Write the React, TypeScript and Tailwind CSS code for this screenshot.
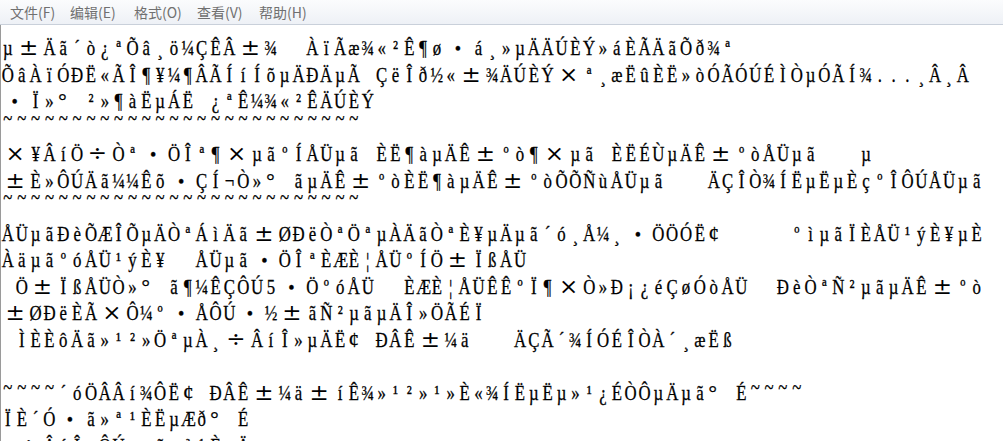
import React from "react";

const FULL_MATH = new Set(["±", "×", "÷"]);
const FULL_LEFT = new Set(["°", "¢", "¨", "§", "¤"]);

const T26 = "~".repeat(26);

const LINES: string[] = [
  "µ±Äã´ò¿ªÕâ¸ö¼ÇÊÂ±¾  ÀïÃæ¾«²Ê¶ø·á¸»µÄÄÚÈÝ»áÈÃÄãÕð¾ª",
  "ÕâÀïÓÐË«ÃÎ¶¥¼¶ÂÃÍíÍõµÄÐÄµÃ ÇëÎð½«±¾ÄÚÈÝ×ª¸æËûÈË»òÓÃÓÚÉÌÒµÓÃÍ¾...¸Â¸Â",
  "·Ï»°²»¶àËµÁË ¿ªÊ¼¾«²ÊÄÚÈÝ",
  T26,
  "×¥ÂíÖ÷Òª·ÖÎª¶×µãºÍÅÜµã ÈË¶àµÄÊ±ºò¶×µã ÈËÉÙµÄÊ±ºòÅÜµã   µ",
  "±È»ÔÚÄã¼¼Êõ·ÇÍ¬Ò»°ãµÄÊ±ºòÈË¶àµÄÊ±ºòÕÕÑùÅÜµã   ÄÇÎÒ¾ÍËµËµÈçºÎÔÚÅÜµã",
  T26,
  "ÅÜµãÐèÕÆÎÕµÄÒªÁìÄã±ØÐëÒªÖªµÀÄãÒªÈ¥µÄµã´ó¸Å¼¸·ÖÖÓË¢    ºìµãÏÈÅÜ¹ýÈ¥µÈ",
  "ÀäµãºóÅÜ¹ýÈ¥  ÅÜµã·ÖÎªÈÆÈ¦ÅÜºÍÖ±ÏßÅÜ",
  " Ö±ÏßÅÜÒ»°ã¶¼ÊÇÔÚ5·ÖºóÅÜ  ÈÆÈ¦ÅÜÊÊºÏ¶×Ò»Ð¡¿éÇøÓòÅÜ  ÐèÒªÑ²µãµÄÊ±ºò",
  "±ØÐëÈÃ×Ô¼º·ÅÔÚ·½±ãÑ²µãµÄÎ»ÖÃÉÏ",
  " ÌÈÈôÄã»¹²»ÖªµÀ¸÷ÂíÎ»µÄË¢ÐÂÊ±¼ä   ÄÇÃ´¾ÍÓÉÎÒÀ´¸æËß",
  "",
  "~~~~´óÖÂÂí¾ÔË¢ÐÂÊ±¼ä±íÊ¾»¹²»¹»È«¾ÍËµËµ»¹¿ÉÒÔµÄµã°É~~~~",
  "ÏÈ´Ó·ã»ª¹ÈËµÆð°É",
  "¸÷ÂíÎ»ÔÚ·ã»ª¹ÈµÄ",
];

function Cell({ ch, high }: { ch: string; high: boolean }) {
  if (FULL_MATH.has(ch)) {
    return (
      <span className="inline-block w-[34.63px] text-center leading-[20px]">
        <span className="inline-block scale-x-[1.25] font-['DejaVu_Serif',serif] text-[23px] [-webkit-text-stroke:0px]">
          {ch}
        </span>
      </span>
    );
  }
  if (FULL_LEFT.has(ch)) {
    return (
      <span className="inline-block w-[34.63px] text-left leading-[20px]">
        <span className="inline-block origin-left scale-x-[1.25] pl-[2px]">{ch}</span>
      </span>
    );
  }
  if (ch === "·") {
    return (
      <span className="inline-block w-[34.63px] text-center leading-[20px]">
        <span className="inline-block scale-x-[1.25] text-[18px]">•</span>
      </span>
    );
  }
  if (ch === "~") {
    return high ? (
      <span className="inline-block w-[17.31px] text-center -translate-y-[10px]">~</span>
    ) : (
      <span className="inline-block w-[17.31px] text-center -translate-y-[6px]">~</span>
    );
  }
  return <span className="inline-block w-[17.31px] text-center">{ch}</span>;
}

function Line({ text }: { text: string }) {
  const high = /^~+$/.test(text);
  return (
    <div className="h-[26.5px] whitespace-pre">
      {Array.from(text).map((ch, i) => (
        <Cell key={i} ch={ch} high={high} />
      ))}
    </div>
  );
}

export default function App() {
  return (
    <div className="w-[1003px] h-[441px] overflow-hidden bg-white flex flex-col">
      <div className="h-[25px] shrink-0 flex items-center pl-[10px] bg-gradient-to-b from-[#fbfcfd] to-[#eef1f6] border-b border-[#c9d0da] font-['Noto_Sans_CJK_SC',sans-serif] text-[14px] text-[#707070] whitespace-nowrap">
        <span className="w-[60px]">文件(F)</span>
        <span className="w-[64px]">编辑(E)</span>
        <span className="w-[63px]">格式(O)</span>
        <span className="w-[62px]">查看(V)</span>
        <span>帮助(H)</span>
      </div>
      <div className="flex-1 overflow-hidden border-l border-[#9a9a9a] pt-[10px]">
        <div className="origin-top-left scale-x-[0.8] w-[1260px] font-['Liberation_Serif',serif] text-[21px] leading-[26.5px] text-black [-webkit-text-stroke:0.3px_#000]">
          {LINES.map((l, i) => (
            <Line key={i} text={l} />
          ))}
        </div>
      </div>
    </div>
  );
}
